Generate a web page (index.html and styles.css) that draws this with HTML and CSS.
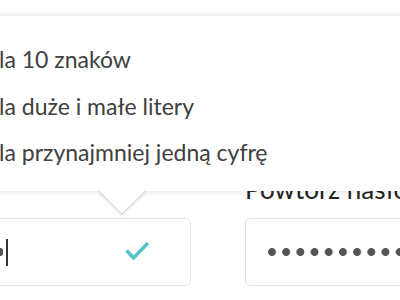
FILE: index.html
```html
<!DOCTYPE html>
<html lang="pl">
<head>
<meta charset="utf-8">
<link rel="stylesheet" href="styles.css">
</head>
<body>
<div class="page">
  <div class="form">
    <div class="field field-left">
      <div class="label label-empty"></div>
      <div class="input">
        <span class="dots dots-left"></span>
        <span class="caret"></span>
        <svg class="check" width="26" height="22" viewBox="0 0 26 22"><path d="M2.5 10.5 L9.5 18 L24 3" fill="none" stroke="#55c4cc" stroke-width="3.6" stroke-linecap="butt" stroke-linejoin="miter"/></svg>
      </div>
    </div>
    <div class="field field-right">
      <label class="label">Powtórz hasło</label>
      <div class="input">
        <span class="dots dots-right"></span>
      </div>
    </div>
  </div>
  <div class="tooltip">
    <ul class="rules">
      <li>la 10 znaków</li>
      <li>la duże i małe litery</li>
      <li>la przynajmniej jedną cyfrę</li>
    </ul>
    <span class="arrow"></span>
  </div>
</div>
</body>
</html>
```
FILE: styles.css
```css
html, body {
  margin: 0;
  padding: 0;
  background: #ffffff;
  overflow: hidden;
}
body {
  width: 400px;
  height: 300px;
  font-family: Lato, "Open Sans", sans-serif;
}
.page {
  position: relative;
  width: 400px;
  height: 300px;
  overflow: hidden;
}
.form {
  display: flex;
  gap: 54px;
  margin-left: -49px;
  padding-top: 171px;
}
.field {
  display: flex;
  flex-direction: column;
  gap: 11px;
  width: 240px;
  flex: none;
}
.field-right {
  width: 260px;
}
.label {
  font-size: 26px;
  line-height: 36px;
  height: 36px;
  color: #222222;
  white-space: nowrap;
}
.input {
  position: relative;
  box-sizing: border-box;
  height: 68px;
  border: 1px solid #e3e3e3;
  border-radius: 5px;
  background: #fff;
  display: flex;
  align-items: center;
}
.dots {
  display: block;
  height: 8px;
  background: radial-gradient(circle at 4px 4px, #555555 3.6px, rgba(85,85,85,0) 4.3px) 0 0 / 14.2px 8px repeat-x;
}
.dots-left {
  width: 55px;
  margin-left: -4px;
  background-position: 5.6px 0;
}
.caret {
  width: 1.5px;
  height: 27px;
  background: #333;
  margin-left: 3px;
}
.check {
  margin-left: 116px;
  margin-top: -2px;
}
.dots-right {
  width: 160px;
  margin-left: 22px;
}
.tooltip {
  position: absolute;
  top: 16px;
  left: -20px;
  width: 440px;
  height: 175px;
  background: #fff;
  box-shadow: 0 0 7px rgba(0, 0, 0, 0.14);
  z-index: 2;
}
.rules {
  list-style: none;
  margin: 0;
  padding: 20px 0 0 19px;
  font-size: 23px;
  line-height: 46.5px;
  color: #404040;
}
.arrow {
  position: absolute;
  left: 125px;
  top: 158px;
  width: 33px;
  height: 33px;
  background: #fff;
  border-right: 1px solid #d2d2d2;
  border-bottom: 1px solid #d2d2d2;
  transform: rotate(45deg);
  box-shadow: 2px 2px 3px rgba(0, 0, 0, 0.05);
}
```
